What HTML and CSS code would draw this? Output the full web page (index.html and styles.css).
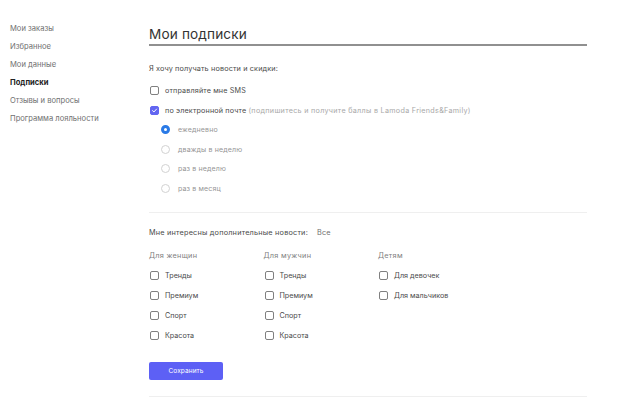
FILE: index.html
```html
<!DOCTYPE html>
<html lang="ru">
<head>
<meta charset="utf-8">
<link rel="stylesheet" href="styles.css">
</head>
<body>
<div class="page">
  <nav class="sidebar">
    <a class="nav-item">Мои заказы</a>
    <a class="nav-item">Избранное</a>
    <a class="nav-item">Мои данные</a>
    <a class="nav-item active">Подписки</a>
    <a class="nav-item">Отзывы и вопросы</a>
    <a class="nav-item">Программа лояльности</a>
  </nav>
  <main class="main">
    <h1 class="title">Мои подписки</h1>
    <p class="intro">Я хочу получать новости и скидки:</p>
    <div class="opt-row"><span class="cb"></span><span class="opt-text">отправляйте мне SMS</span></div>
    <div class="opt-row"><span class="cb checked"><svg viewBox="0 0 10 10" width="9" height="9"><path d="M2.2 5.2 L4.2 7.1 L7.9 3" fill="none" stroke="#fff" stroke-width="1.4" stroke-linecap="round" stroke-linejoin="round"/></svg></span><span class="opt-text">по электронной почте <span class="muted">(подпишитесь и получите баллы в Lamoda Friends&amp;Family)</span></span></div>
    <div class="radios">
      <div class="radio-row"><span class="rb on"></span><span class="radio-text">ежедневно</span></div>
      <div class="radio-row"><span class="rb"></span><span class="radio-text">дважды в неделю</span></div>
      <div class="radio-row"><span class="rb"></span><span class="radio-text">раз в неделю</span></div>
      <div class="radio-row"><span class="rb"></span><span class="radio-text">раз в месяц</span></div>
    </div>
    <hr class="sep">
    <div class="extra"><span>Мне интересны дополнительные новости:</span><span class="all">Все</span></div>
    <div class="cols">
      <div class="col">
        <div class="col-head">Для женщин</div>
        <div class="opt-row"><span class="cb"></span><span class="opt-text col-text">Тренды</span></div>
        <div class="opt-row"><span class="cb"></span><span class="opt-text col-text">Премиум</span></div>
        <div class="opt-row"><span class="cb"></span><span class="opt-text col-text">Спорт</span></div>
        <div class="opt-row"><span class="cb"></span><span class="opt-text col-text">Красота</span></div>
      </div>
      <div class="col">
        <div class="col-head">Для мужчин</div>
        <div class="opt-row"><span class="cb"></span><span class="opt-text col-text">Тренды</span></div>
        <div class="opt-row"><span class="cb"></span><span class="opt-text col-text">Премиум</span></div>
        <div class="opt-row"><span class="cb"></span><span class="opt-text col-text">Спорт</span></div>
        <div class="opt-row"><span class="cb"></span><span class="opt-text col-text">Красота</span></div>
      </div>
      <div class="col">
        <div class="col-head">Детям</div>
        <div class="opt-row"><span class="cb"></span><span class="opt-text col-text">Для девочек</span></div>
        <div class="opt-row"><span class="cb"></span><span class="opt-text col-text">Для мальчиков</span></div>
      </div>
    </div>
    <button class="save">Сохранить</button>
    <div class="bottom-line"></div>
  </main>
</div>
</body>
</html>
```
FILE: styles.css
```css
* { box-sizing: border-box; }
html, body { margin: 0; padding: 0; background: #fff; }
body {
  font-family: Inter, "Open Sans", "DejaVu Sans", sans-serif;
  color: #444;
  width: 617px;
  height: 403px;
  overflow: hidden;
}
.page { display: flex; }
.sidebar {
  width: 149px;
  padding: 20px 0 0 10px;
  display: flex;
  flex-direction: column;
}
.nav-item {
  font-size: 7.6px;
  line-height: 18px;
  color: #707070;
  white-space: nowrap;
}
.nav-item.active { color: #222; font-weight: 700; }
.main {
  width: 438px;
  display: flex;
  flex-direction: column;
}
.title {
  margin: 24px 0 0;
  font-size: 13.6px;
  font-weight: 400;
  line-height: 20px;
  color: #333;
  border-bottom: 2px solid #909090;
  letter-spacing: 0.15px;
}
.intro {
  margin: 16px 0 4px;
  font-size: 7.3px;
  line-height: 14px;
  color: #4a4a4a;
  letter-spacing: 0.12px;
}
.opt-row {
  display: flex;
  align-items: center;
  height: 20px;
  padding-left: 1px;
}
.cb {
  width: 9px;
  height: 9px;
  border: 1px solid #808080;
  border-radius: 2px;
  flex: none;
  display: flex;
  align-items: center;
  justify-content: center;
}
.cb.checked { background: #6266f1; border-color: #6266f1; }
.cb.checked svg { display: block; }
.opt-text {
  margin-left: 6px;
  font-size: 7.2px;
  color: #4a4a4a;
  white-space: nowrap;
  letter-spacing: 0.15px;
}
.opt-text.col-text { letter-spacing: 0; }
.muted { color: #a8a8a8; letter-spacing: 0.3px; }
.radios { padding-left: 12px; }
.radio-row {
  display: flex;
  align-items: center;
  height: 19.5px;
}
.rb {
  width: 9px;
  height: 9px;
  border: 1px solid #d2d2d2;
  border-radius: 50%;
  flex: none;
}
.rb.on {
  border: 3px solid #2a7ae6;
  background: #fff;
}
.radio-text {
  margin-left: 8px;
  font-size: 7px;
  color: #959595;
  letter-spacing: 0.15px;
}
.sep {
  margin: 14px 0 0;
  border: 0;
  border-top: 1px solid #efefef;
  height: 0;
}
.extra {
  margin-top: 13px;
  font-size: 7.3px;
  line-height: 14px;
  color: #4a4a4a;
  display: flex;
  letter-spacing: 0.2px;
}
.extra .all { margin-left: 9px; color: #707070; }
.cols { display: flex; margin-top: 9px; }
.col { width: 114.5px; }
.col-head {
  font-size: 7.3px;
  line-height: 14px;
  color: #808080;
  margin-bottom: 2px;
  letter-spacing: 0.3px;
}
.save {
  margin-top: 17px;
  width: 74px;
  height: 18px;
  border: 0;
  border-radius: 2px;
  background: #5d60f5;
  color: #fff;
  font-family: inherit;
  font-size: 6.5px;
  padding: 0;
  letter-spacing: 0.1px;
}
.bottom-line {
  margin-top: 16px;
  border-top: 1px solid #efefef;
}
```
